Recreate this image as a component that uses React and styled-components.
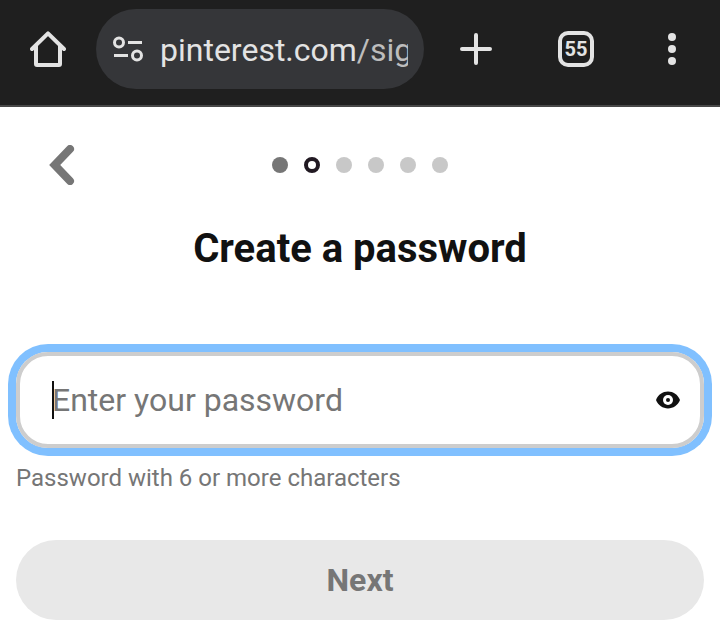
import React, { useState } from "react";
import styled, { createGlobalStyle } from "styled-components";

const STEPS = ["done", "current", "todo", "todo", "todo", "todo"];

const App = () => {
  const [password, setPassword] = useState("");
  const [visible, setVisible] = useState(false);

  return (
    <>
      <GlobalStyle />
      <BrowserBar>
        <BarButton aria-label="Home">
          <svg width="36" height="36" viewBox="0 0 36 36" fill="none" stroke="#e3e3e3" strokeWidth="4">
            <path d="M6 15V33a1 1 0 0 0 1 1H29a1 1 0 0 0 1-1V15" />
            <path d="M2 18L18 2.4L34 18" strokeLinecap="round" strokeLinejoin="round" />
          </svg>
        </BarButton>
        <AddressPill>
          <SiteInfo aria-label="Site information">
            <svg width="30" height="26" viewBox="0 0 30 26" fill="none" stroke="#e3e3e3" strokeWidth="3">
              <circle cx="6" cy="6.5" r="4.5" />
              <path d="M15 6.5H29M1 19.5H15" />
              <circle cx="24" cy="19.5" r="4.5" />
            </svg>
          </SiteInfo>
          <Url>
            pinterest.com<span>/sig</span>
          </Url>
        </AddressPill>
        <BarButton aria-label="New tab" $wide>
          <svg width="32" height="32" viewBox="0 0 32 32" stroke="#e3e3e3" strokeWidth="4" strokeLinecap="round">
            <path d="M16 2V30M2 16H30" />
          </svg>
        </BarButton>
        <BarButton aria-label="Open tabs">
          <TabCount>55</TabCount>
        </BarButton>
        <BarButton aria-label="Menu">
          <svg width="8" height="32" viewBox="0 0 8 32" fill="#e3e3e3">
            <circle cx="4" cy="4" r="4" />
            <circle cx="4" cy="16" r="4" />
            <circle cx="4" cy="28" r="4" />
          </svg>
        </BarButton>
      </BrowserBar>

      <Page>
        <StepHeader>
          <BackButton aria-label="Back">
            <svg width="26" height="40" viewBox="0 0 26 40" fill="none" stroke="#767676" strokeWidth="8">
              <path d="M21 4L5.7 20L21 36" strokeLinecap="round" />
            </svg>
          </BackButton>
          <Dots>
            {STEPS.map((state, i) => (
              <Dot key={i} $state={state} />
            ))}
          </Dots>
        </StepHeader>

        <Title>
          <label htmlFor="password">Create a password</label>
        </Title>

        <form onSubmit={(e) => e.preventDefault()}>
          <Field>
            {password === "" && <Caret />}
            <PasswordInput
              id="password"
              type={visible ? "text" : "password"}
              placeholder="Enter your password"
              aria-describedby="hint"
              value={password}
              $empty={password === ""}
              onChange={(e) => setPassword(e.target.value)}
            />
            <EyeButton type="button" aria-label="Show password" onClick={() => setVisible(!visible)}>
              <svg width="24" height="18" viewBox="0 0 24 18">
                <path
                  d="M12 0.5C6.8 0.5 2.1 3.9 0.3 8.2a2 2 0 0 0 0 1.6C2.1 14.1 6.8 17.5 12 17.5s9.9-3.4 11.7-7.7a2 2 0 0 0 0-1.6C21.9 3.9 17.2 0.5 12 0.5Z"
                  fill="#111"
                />
                <circle cx="12" cy="9" r="5" fill="#fff" />
                <circle cx="12" cy="9" r="2" fill="#111" />
              </svg>
            </EyeButton>
          </Field>
          <Hint id="hint">Password with 6 or more characters</Hint>
          <NextButton disabled={password.length < 6}>Next</NextButton>
        </form>
      </Page>
    </>
  );
};

export default App;

const GlobalStyle = createGlobalStyle`
  * {
    box-sizing: border-box;
  }
  body {
    margin: 0;
    background: #fff;
    color: #111;
    font-family: Roboto, sans-serif;
  }
  button,
  input {
    margin: 0;
    padding: 0;
    border: none;
    background: none;
    font-family: inherit;
  }
  svg {
    display: block;
  }
`;

const BrowserBar = styled.header`
  display: flex;
  align-items: center;
  padding: 9px 0 16px;
  background: #1f1f1f;
  border-bottom: 2px solid #474747;
`;

const BarButton = styled.button`
  display: flex;
  flex: none;
  align-items: center;
  justify-content: center;
  width: ${({ $wide }) => ($wide ? "104px" : "96px")};
  height: 80px;
`;

const AddressPill = styled.div`
  display: flex;
  flex: 1;
  align-items: center;
  gap: 16px;
  min-width: 0;
  height: 80px;
  padding: 0 16px;
  border-radius: 40px;
  background: #353639;
`;

const SiteInfo = styled.button`
  display: flex;
  flex: none;
  justify-content: center;
  width: 32px;
`;

const Url = styled.div`
  flex: 1;
  min-width: 0;
  padding-top: 2px;
  overflow: hidden;
  white-space: nowrap;
  color: #e3e3e3;
  font-size: 32px;
  line-height: 40px;
  span {
    color: #bdbdbd;
  }
`;

const TabCount = styled.span`
  width: 36px;
  height: 36px;
  border: 4px solid #e3e3e3;
  border-radius: 10px;
  color: #e3e3e3;
  font-family: "Liberation Sans Narrow", Roboto, sans-serif;
  font-size: 20px;
  font-weight: 700;
  line-height: 28px;
`;

const Page = styled.main`
  padding: 0 16px 14px;
`;

const StepHeader = styled.div`
  display: grid;
  grid-template-columns: 1fr auto 1fr;
  align-items: center;
  height: 116px;
  padding: 0 16px;
`;

const BackButton = styled.button`
  display: flex;
  align-items: center;
  justify-content: center;
  width: 60px;
  height: 60px;
`;

const Dots = styled.div`
  display: flex;
  gap: 16px;
`;

const dotColors = {
  done: "#767676",
  current: "#fff",
  todo: "#c8c8c8",
};

const Dot = styled.span`
  width: 16px;
  height: 16px;
  border-radius: 50%;
  background: ${({ $state }) => dotColors[$state]};
  border: ${({ $state }) => ($state === "current" ? "4px solid #211922" : "none")};
`;

const Title = styled.h1`
  margin: 0 0 77px;
  font-size: 40px;
  font-weight: 700;
  line-height: 52px;
  text-align: center;
`;

const Field = styled.div`
  position: relative;
  display: flex;
  align-items: center;
  height: 96px;
  padding: 0 20px 0 32px;
  border: 4px solid #cdcdcd;
  border-radius: 32px;
  box-shadow: 0 0 0 8px #80c0ff;
`;

const Caret = styled.span`
  position: absolute;
  left: 32px;
  width: 2px;
  height: 38px;
  background: #111;
`;

const PasswordInput = styled.input`
  flex: 1;
  min-width: 0;
  height: 48px;
  outline: none;
  color: #111;
  caret-color: ${({ $empty }) => ($empty ? "transparent" : "#111")};
  font-size: 32px;
  &::placeholder {
    color: #767676;
    opacity: 1;
  }
`;

const EyeButton = styled.button`
  flex: none;
`;

const Hint = styled.p`
  margin: 16px 0 48px;
  color: #767676;
  font-size: 24px;
  line-height: 28px;
`;

const NextButton = styled.button`
  width: 100%;
  height: 80px;
  border-radius: 40px;
  background: #e8e8e8;
  color: #767676;
  font-size: 32px;
  font-weight: 700;
`;
